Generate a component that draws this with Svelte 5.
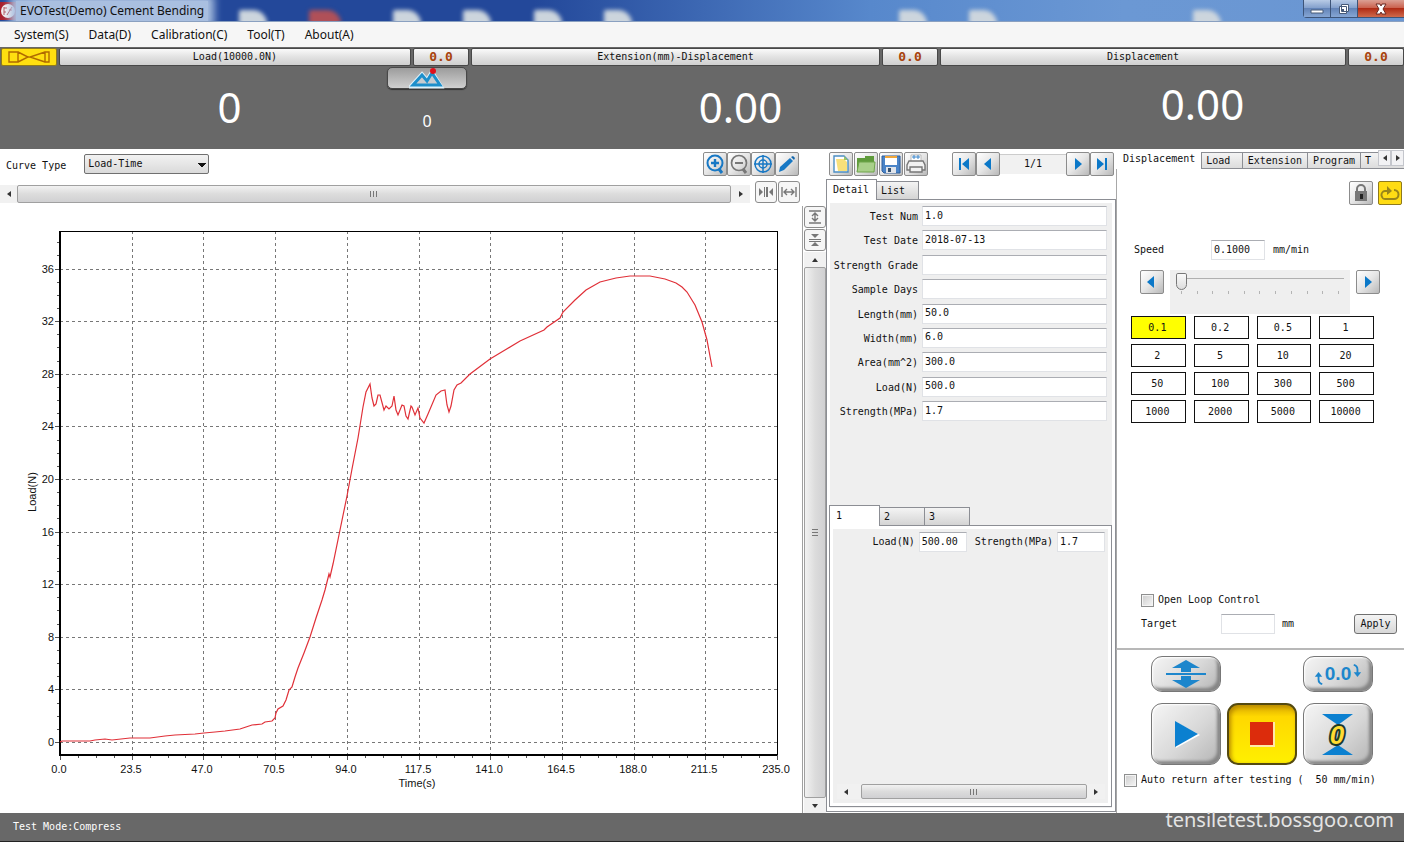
<script lang="ts">
	const menus = ['System(S)', 'Data(D)', 'Calibration(C)', 'Tool(T)', 'About(A)'];
	const speeds = ['0.1', '0.2', '0.5', '1', '2', '5', '10', '20', '50', '100', '300', '500', '1000', '2000', '5000', '10000'];
	const modes = ['Displacement', 'Load', 'Extension', 'Program', 'T'];
	const fields = $state([
		{ id: 'num', label: 'Test Num', value: '1.0' },
		{ id: 'date', label: 'Test Date', value: '2018-07-13' },
		{ id: 'grade', label: 'Strength Grade', value: '' },
		{ id: 'days', label: 'Sample Days', value: '' },
		{ id: 'length', label: 'Length(mm)', value: '50.0' },
		{ id: 'width', label: 'Width(mm)', value: '6.0' },
		{ id: 'area', label: 'Area(mm^2)', value: '300.0' },
		{ id: 'load', label: 'Load(N)', value: '500.0' },
		{ id: 'strength', label: 'Strength(MPa)', value: '1.7' }
	]);
	let speed = $state('0.1');
	let mode = $state('Displacement');
	let detailTab = $state('Detail');
	let sample = $state('1');

	// chart geometry
	const left = 60;
	const right = 777;
	const top = 25;
	const bottom = 549;
	const xTicks = Array.from({ length: 11 }, (_, i) => ({
		x: left + Math.round((i * (right - left)) / 10),
		label: (i * 23.5).toFixed(1)
	}));
	const yTicks = Array.from({ length: 10 }, (_, i) => ({ y: 536 - Math.round(i * 52.6), label: i * 4 }));
	const xMinor = Array.from({ length: 40 }, (_, i) => left + Math.round((i * (right - left)) / 40));
	const yMinor = Array.from({ length: 39 }, (_, i) => 536 - Math.round(i * 13.15));
	const curve =
		'60,536 62,535 90,535 95,534 105,533 112,534 130,532 150,532 165,530 175,529 195,528 204,527 215,526 225,525 240,523 246,521 252,519 262,518 265,516 272,515 275,512 276,507 278,503 283,500 286,494 289,484 292,481 295,471 298,462 304,447 310,431 316,412 322,394 325,384 327,376 329,368 330,371 333,358 340,324 347,290 352,263 358,232 363,201 366,186 370,178 372,192 374,200 376,198 378,189 380,189 384,204 386,200 389,203 392,200 394,190 396,204 398,209 402,199 404,200 406,210 408,213 411,200 412,201 415,209 418,202 420,212 424,217 428,208 436,189 441,185 445,184 447,199 449,206 451,200 454,184 457,179 461,177 470,168 490,153 505,144 520,135 544,124 547,121 560,112 563,106 575,94 586,84 600,76 616,72 630,70 650,70 665,73 676,77 682,81 687,86 695,99 702,116 707,134 712,161';
</script>

{#snippet grip()}
	<i class="grip"></i>
{/snippet}

<div class="app">
	<header class="titlebar">
		<svg class="logo" viewBox="0 0 16 18">
			<rect width="16" height="18" fill="#a81f2c" />
			<circle cx="8" cy="9" r="7" fill="#f4f0f0" />
			<path d="M4 5v8M4 6h3M4 10h2M7 13l5-8M9 8h3" stroke="#b4525c" fill="none" />
		</svg>
		<span class="title">EVOTest(Demo) Cement Bending</span>
		<i class="blob b1"></i><i class="blob red"></i><i class="blob b2"></i><i class="blob b3"></i>
		<i class="blob b4"></i><i class="blob b5"></i><i class="blob b6"></i><i class="blob b7"></i><i class="blob b8"></i>
		<div class="winButtons">
			<button aria-label="Minimize"><svg viewBox="0 0 14 12"><path d="M1 7h12v3H1z" fill="#fff" stroke="#475a78" /></svg></button>
			<button aria-label="Restore"><svg viewBox="0 0 14 12"><path d="M4.500 1.500h7v7h-7zM2.500 3.500h7v7h-7z" fill="#fff" stroke="#475a78" /><path d="M5 6h2v2H5z" fill="#475a78" /></svg></button>
			<button class="close" aria-label="Close"><svg viewBox="0 0 14 12"><path d="M2 1h4l1 2 1-2h4L9 6l3 5H8L7 9l-1 2H2l3-5z" fill="#fff" stroke="#6b2a24" /></svg></button>
		</div>
	</header>

	<nav class="menu">
		{#each menus as item}
			<button>{item}</button>
		{/each}
	</nav>

	<section class="readouts">
		<div class="readout">
			<div class="bar">
				<button class="clamp" aria-label="Specimen">
					<svg viewBox="0 0 42 12"><path d="M1 1h9v10H1zM10 1l10 5-10 5M41 1h-4v10h4zM37 1L22 6l15 5" fill="none" stroke="#b06a00" stroke-width="1.4" /></svg>
				</button>
				<button class="name">Load(10000.0N)</button>
				<button class="zero">0.0</button>
			</div>
			<div class="values">
				<output class="big">0</output>
				<div class="peak">
					<button aria-label="Peak">
						<svg viewBox="0 0 36 22"><path d="M3 19L13 8l5 6 5-8 8 13z" fill="none" stroke="#dff2fb" stroke-width="5" /><path d="M4 18L13 8l5 6 5-8 8 12z" fill="#c8ccd0" stroke="#1d8fcb" stroke-width="3" /><circle cx="24" cy="4" r="3" fill="#e0101c" /></svg>
					</button>
					<output>0</output>
				</div>
			</div>
		</div>
		<div class="readout">
			<div class="bar">
				<button class="name">Extension(mm)-Displacement</button>
				<button class="zero">0.0</button>
			</div>
			<div class="values"><output class="big">0.00</output></div>
		</div>
		<div class="readout last">
			<div class="bar">
				<button class="name">Displacement</button>
				<button class="zero">0.0</button>
			</div>
			<div class="values"><output class="big">0.00</output></div>
		</div>
	</section>

	<main>
		<section class="chartPane">
			<div class="curveBar">
				<label for="curve">Curve Type</label>
				<select id="curve">
					<option>Load-Time</option>
					<option>Load-Extension</option>
				</select>
				<div class="tools">
					<button class="tool" aria-label="Zoom in"><svg viewBox="0 0 22 22" fill="none" stroke="#1878c4" stroke-width="2"><circle cx="11" cy="10" r="7.5" /><path d="M11 6v8M7 10h8" stroke-width="2.4" /><path d="M15 16l3 4" stroke-width="3" /></svg></button>
					<button class="tool" aria-label="Zoom out"><svg viewBox="0 0 22 22" fill="none" stroke="#777" stroke-width="1.7"><circle cx="11" cy="10" r="7.5" /><path d="M7 10h8" stroke-width="2" /><path d="M15 16l3 4" stroke-width="3" /></svg></button>
					<button class="tool" aria-label="Fit"><svg viewBox="0 0 22 22" fill="none" stroke="#1878c4" stroke-width="1.5"><circle cx="11" cy="11" r="8" /><circle cx="11" cy="11" r="4" /><path d="M11 2v18M2 11h18" /></svg></button>
					<button class="tool" aria-label="Edit"><svg viewBox="0 0 22 22"><path d="M3 19l1-5L14 5l3 3-9 9z" fill="#1878c4" /><path d="M15 4l2-1 2 2-1 2z" fill="#1467ab" /></svg></button>
				</div>
			</div>
			<div class="scrollRow">
				<div class="scroll">
					<button aria-label="Scroll left"><i class="arrow west"></i></button>
					<div class="thumb">{@render grip()}</div>
					<button aria-label="Scroll right"><i class="arrow east"></i></button>
				</div>
				<button class="fit" aria-label="Compress time"><svg viewBox="0 0 16 16" fill="#777"><path d="M1 4l4 4-4 4zM15 4l-4 4 4 4zM6 3h1v10H6zM8 3h2v10H8z" /></svg></button>
				<button class="fit" aria-label="Expand time"><svg viewBox="0 0 16 16" fill="none" stroke="#777" stroke-width="1.4"><path d="M1 3v10M15 3v10M3 8h10M6 5L3 8l3 3M10 5l3 3-3 3" /></svg></button>
			</div>
			<svg class="chart" viewBox="0 0 802 606" role="img" aria-label="Load over time">
				{#each xTicks.slice(1, 10) as t}
					<line class="gridline" x1={t.x} x2={t.x} y1={top} y2={bottom} />
				{/each}
				{#each yTicks as t}
					<line class="gridline" x1={left} x2={right} y1={t.y} y2={t.y} />
					<line class="tick" x1={left - 5} x2={left} y1={t.y} y2={t.y} />
					<text x="54" y={t.y + 4} text-anchor="end">{t.label}</text>
				{/each}
				{#each xMinor as x}
					<line class="tick" x1={x} x2={x} y1={bottom} y2={bottom + 3} />
				{/each}
				{#each yMinor as y}
					<line class="tick" x1={left - 3} x2={left} y1={y} y2={y} />
				{/each}
				{#each xTicks as t}
					<line class="tick" x1={t.x} x2={t.x} y1={bottom} y2={bottom + 5} />
					<text x={t.x - 1} y="567" text-anchor="middle">{t.label}</text>
				{/each}
				<path d="M{left} {top}H{right}V{bottom}" class="frame" />
				<path d="M{left} {top}V{bottom}H{right}" class="axis" />
				<text x="417" y="581" text-anchor="middle">Time(s)</text>
				<text transform="translate(36 286) rotate(-90)" text-anchor="middle">Load(N)</text>
				<polyline points={curve} />
			</svg>
		</section>

		<aside class="strip">
			<button class="fit" aria-label="Expand load"><svg viewBox="0 0 16 16" fill="none" stroke="#777" stroke-width="1.4"><path d="M2 2h12M2 14h12M8 4v8M5 7l3-3 3 3M5 9l3 3 3-3" /></svg></button>
			<button class="fit" aria-label="Compress load"><svg viewBox="0 0 16 16" fill="#777"><path d="M4 2h8L8 6zM4 14h8l-4-4zM2 7h12v1H2zM2 9h12v1H2z" /></svg></button>
			<div class="scroll vertical">
				<button aria-label="Scroll up"><i class="arrow north"></i></button>
				<div class="thumb">{@render grip()}</div>
				<button aria-label="Scroll down"><i class="arrow south"></i></button>
			</div>
		</aside>

		<section class="record">
			<div class="recordBar">
				<button class="tool" aria-label="New"><svg viewBox="0 0 22 22"><path d="M4 3h10l4 4v12H4z" fill="#fff" stroke="#4c8fc4" stroke-width="1.4" /><path d="M6 6h8l3 3v9H8z" fill="#f8e07a" /><path d="M14 3l4 4h-4z" fill="#9ac46a" /></svg></button>
				<button class="tool" aria-label="Open"><svg viewBox="0 0 22 22"><path d="M2 5h8V3h9v15H2z" fill="#5f9b3c" /><path d="M4 9h16l-1 10H2z" fill="#a9d08a" stroke="#6ea44b" /></svg></button>
				<button class="tool" aria-label="Save"><svg viewBox="0 0 22 22"><path d="M2 3h18v17H4l-2-2z" fill="#4a84c8" stroke="#2e5f9c" /><path d="M5 4h12v8H5z" fill="#fff" /><path d="M5 3h12v2H5z" fill="#f0a63a" /><path d="M6 14h10v6H6z" fill="#e0e4ea" /><path d="M8 15h3v4H8z" fill="#35506f" /></svg></button>
				<button class="tool" aria-label="Print"><svg viewBox="0 0 22 22" fill="#f2f2f2" stroke="#777"><path d="M6 9V2h10v7z" fill="#fff" stroke="#bbb" /><path d="M8 3h2v2H8zM12 3h2v2h-2z" stroke="#3a86cc" fill="none" /><path d="M4 8h14l2 4v5H2v-5z" stroke-width="1.4" /><path d="M5 14h12v5H5z" stroke-width="1.4" /></svg></button>
				<div class="pager">
					<button class="tool" aria-label="First"><svg viewBox="0 0 22 22" fill="#0b78c8"><path d="M6 5h2v12H6zM16 5v12l-7-6z" /></svg></button>
					<button class="tool" aria-label="Previous"><svg viewBox="0 0 22 22" fill="#0b78c8"><path d="M14 5v12l-7-6z" /></svg></button>
					<span>1/1</span>
					<button class="tool" aria-label="Next"><svg viewBox="0 0 22 22" fill="#0b78c8"><path d="M8 5v12l7-6z" /></svg></button>
					<button class="tool" aria-label="Last"><svg viewBox="0 0 22 22" fill="#0b78c8"><path d="M6 5v12l7-6zM14 5h2v12h-2z" /></svg></button>
				</div>
			</div>
			<div class="tabs" role="tablist">
				{#each ['Detail', 'List'] as tab}
					<button role="tab" aria-selected={detailTab === tab} class:active={detailTab === tab} onclick={() => (detailTab = tab)}>{tab}</button>
				{/each}
			</div>
			<div class="sheet outer">
				<form class="fields">
					{#each fields as field}
						<div class="field">
							<label for={field.id}>{field.label}</label>
							<input id={field.id} bind:value={field.value} />
						</div>
					{/each}
				</form>
				<div class="tabs sub" role="tablist">
					{#each ['1', '2', '3'] as tab}
						<button role="tab" aria-selected={sample === tab} class:active={sample === tab} onclick={() => (sample = tab)}>{tab}</button>
					{/each}
				</div>
				<div class="sheet inner">
					<div class="result">
						<label for="rload">Load(N)</label>
						<input id="rload" value="500.00" />
						<label for="rstrength">Strength(MPa)</label>
						<input id="rstrength" value="1.7" />
					</div>
					<div class="scroll small">
						<button aria-label="Scroll left"><i class="arrow west"></i></button>
						<div class="thumb">{@render grip()}</div>
						<button aria-label="Scroll right"><i class="arrow east"></i></button>
					</div>
				</div>
			</div>
		</section>

		<section class="control">
			<div class="modes" role="tablist">
				{#each modes as tab}
					<button role="tab" aria-selected={mode === tab} class:active={mode === tab} onclick={() => (mode = tab)}>{tab}</button>
				{/each}
				<div class="modeArrows">
					<button aria-label="Previous tab"><i class="arrow west"></i></button>
					<button aria-label="Next tab"><i class="arrow east"></i></button>
				</div>
			</div>
			<div class="modePanel">
				<div class="locks">
					<button class="tool" aria-label="Lock"><svg viewBox="0 0 22 22"><path d="M7 10V7a4 4 0 0 1 8 0v3" fill="none" stroke="#777" stroke-width="2" /><rect x="5" y="9" width="12" height="10" fill="#777" /><path d="M10 12h3v5h-3z" fill="#222" /></svg></button>
					<button class="tool yellow" aria-label="Loop"><svg viewBox="0 0 22 22"><path d="M15 8a4.500 4.500 0 0 1 0 9H7a4 4 0 0 1-1-8h4" fill="none" stroke="#99851a" stroke-width="2" /><path d="M8 4l5 5-5 4z" fill="#99851a" /></svg></button>
				</div>
				<div class="speedRow">
					<label for="speed">Speed</label>
					<input id="speed" value="0.1000" />
					<span>mm/min</span>
				</div>
				<div class="sliderRow">
					<button class="tool" aria-label="Slower"><svg viewBox="0 0 22 22" fill="#0b78c8"><path d="M13 5v12l-7-6z" /></svg></button>
					<div class="slider">
						<input type="range" min="0" max="10" value="0" aria-label="Speed" />
						<div class="ticks">
							{#each Array(11) as _}<i></i>{/each}
						</div>
					</div>
					<button class="tool" aria-label="Faster"><svg viewBox="0 0 22 22" fill="#0b78c8"><path d="M8 5v12l7-6z" /></svg></button>
				</div>
				<div class="speeds">
					{#each speeds as s}
						<button class:selected={speed === s} onclick={() => (speed = s)}>{s}</button>
					{/each}
				</div>
				<label class="check loop"><input type="checkbox" />Open Loop Control</label>
				<div class="target">
					<label for="target">Target</label>
					<input id="target" />
					<span>mm</span>
					<button>Apply</button>
				</div>
			</div>
			<div class="drive">
				<div class="driveRow">
					<button class="pill" aria-label="Move"><svg viewBox="0 0 44 30" fill="#1d86cc"><path d="M22 1l14 8h-9v4H17V9H8zM22 29l14-8h-9v-4H17v4H8zM2 14h40v2H2z" /></svg></button>
					<button class="pill zeroAll">
						<svg viewBox="0 0 9 14"><path d="M4 3v5q0 4 4 5" fill="none" stroke="#1d86cc" stroke-width="2" /><path d="M0 5l4-5 4 5z" fill="#1d86cc" /></svg>
						0.0
						<svg class="cw" viewBox="0 0 9 14"><path d="M4 3v5q0 4 4 5" fill="none" stroke="#1d86cc" stroke-width="2" /><path d="M0 5l4-5 4 5z" fill="#1d86cc" /></svg>
					</button>
				</div>
				<div class="driveRow">
					<button class="large" aria-label="Start"><svg viewBox="0 0 46 46"><path d="M13 11v26l24-13z" fill="#fff" /><path d="M12 10v26l23-13z" fill="#0b80d0" /></svg></button>
					<button class="large stop" aria-label="Stop"><svg viewBox="0 0 46 46"><path d="M11 11h25v25H11z" fill="#ffe9a8" /><path d="M11 11h23v23H11z" fill="#dc2c0c" /></svg></button>
					<button class="large" aria-label="Return to zero">
						<svg viewBox="0 0 46 46"><path d="M7 3h31L23 14zM7 44h31L23 34z" fill="#0b80d0" /><text x="22" y="33">0</text></svg>
					</button>
				</div>
				<label class="check"><input type="checkbox" />Auto return after testing (<span>50</span>mm/min)</label>
			</div>
		</section>
	</main>

	<footer>
		<span>Test Mode:Compress</span>
		<span class="site">tensiletest.bossgoo.com</span>
	</footer>
</div>

<style>
	:global(body) {
		margin: 0;
		background: #fff;
	}
	.app {
		display: flex;
		flex-direction: column;
		min-height: 100vh;
		font: 10px/14px 'DejaVu Sans Mono', monospace;
		color: #111;
	}
	.app * {
		box-sizing: border-box;
	}
	button,
	input,
	select {
		font: inherit;
		color: inherit;
		margin: 0;
		padding: 0;
		border: 0;
		background: none;
		border-radius: 0;
	}
	button {
		display: flex;
		align-items: center;
		justify-content: center;
	}
	svg {
		display: block;
	}

	.titlebar {
		position: relative;
		display: flex;
		align-items: center;
		height: 22px;
		overflow: hidden;
		border-bottom: 1px solid #8aa0c0;
		background: linear-gradient(90deg, #23489a 0, #23489a 38%, #5788cc 62%, #6b98d4 80%, #6a96d2 100%);
	}
	.logo {
		width: 16px;
		height: 18px;
		z-index: 1;
	}
	.title {
		z-index: 1;
		padding: 0 4px;
		font: 12px/20px 'Noto Sans', sans-serif;
		background: #a9bfe0;
		box-shadow: 0 0 8px 6px #a9bfe0;
	}
	.blob {
		position: absolute;
		top: 10px;
		width: 28px;
		height: 16px;
		border-radius: 2px 14px 0 0;
		background: #ccd5dd;
		filter: blur(2px);
	}
	.b1 { left: 17%; }
	.b2 { left: 28%; }
	.b3 { left: 33%; }
	.b4 { left: 38%; }
	.b5 { left: 43%; }
	.b6 { left: 64%; }
	.b7 { left: 69%; }
	.b8 { left: 85%; }
	.red {
		left: 22%;
		width: 32px;
		background: #b05058;
	}
	.winButtons {
		display: flex;
		align-self: flex-start;
		margin-left: auto;
		z-index: 1;
		border: 1px solid #3d5478;
		border-width: 0 0 1px 1px;
		border-radius: 0 0 0 4px;
	}
	.winButtons button {
		width: 27px;
		height: 17px;
		border-right: 1px solid #3d5478;
		background: linear-gradient(#b8cbe6, #7f9dca 50%, #6384b8 50%, #86a6d4);
	}
	.winButtons .close {
		width: 46px;
		border: 0;
		background: linear-gradient(#dba094, #c95c48 50%, #b02c16 50%, #cf6a4c);
	}
	.winButtons svg {
		width: 14px;
		height: 12px;
	}

	.menu {
		display: flex;
		gap: 20px;
		height: 25px;
		padding: 0 14px;
		background: #f6f6f6;
		font: 12px/24px 'Noto Sans', sans-serif;
	}

	.readouts {
		display: grid;
		grid-template-columns: 470fr 469fr 465fr;
		height: 102px;
		background: #686868;
	}
	.readout {
		display: flex;
		flex-direction: column;
		min-width: 0;
	}
	.bar {
		display: flex;
		gap: 2px;
		padding: 1px 1px 0;
		height: 19px;
	}
	.last .bar {
		padding-right: 0;
	}
	.bar button {
		border: 1px solid #484848;
		border-radius: 2px;
		background: linear-gradient(#fafafa, #e2e2e2 50%, #cfcfcf);
	}
	.bar .name {
		flex: 1;
	}
	.bar .zero {
		width: 56px;
		font-size: 13px;
		font-weight: bold;
		color: #a8430c;
	}
	.bar .clamp {
		width: 56px;
		background: #ffdf10;
		border-color: #8f7a1c;
	}
	.clamp svg {
		width: 42px;
		height: 12px;
	}
	.values {
		flex: 1;
		display: flex;
		padding-left: 72px;
		color: #fff;
		font-family: 'Noto Sans', sans-serif;
	}
	.last .values {
		padding-left: 62px;
	}
	.big {
		flex: 1;
		text-align: center;
		font-size: 42px;
		line-height: 82px;
	}
	.last .big {
		line-height: 76px;
	}
	.peak {
		display: flex;
		flex-direction: column;
		align-items: center;
		gap: 22px;
		padding: 1px 3px 0 0;
	}
	.peak button {
		width: 80px;
		height: 22px;
		border: 1px solid #484848;
		border-radius: 5px;
		background: linear-gradient(#9c9c9c, #d0d0d0);
		box-shadow: 0 1px 1px #333;
	}
	.peak svg {
		width: 36px;
		height: 22px;
	}
	.peak output {
		font-size: 16px;
		line-height: 20px;
	}

	main {
		flex: 1;
		display: grid;
		grid-template-columns: minmax(0, 1fr) 24px 290px 288px;
	}
	.tool {
		width: 24px;
		height: 24px;
		flex: none;
		border: 1px solid #8c8c8c;
		border-radius: 2px;
		background: linear-gradient(135deg, #fff, #e6e6e6 50%, #b8b8b8);
	}
	.tool svg {
		width: 22px;
		height: 22px;
	}
	.tool.yellow {
		background: #ffdc14;
		border-color: #8f7a1c;
	}
	.fit {
		width: 22px;
		height: 22px;
		flex: none;
		border: 1px solid #8c8c8c;
		border-radius: 3px;
		background: #f6f6f6;
	}
	.fit svg {
		width: 16px;
		height: 16px;
	}

	.chartPane {
		padding-top: 3px;
	}
	.curveBar {
		display: flex;
		align-items: center;
		height: 24px;
		padding: 0 3px 0 6px;
		gap: 18px;
	}
	.curveBar label {
		padding-top: 3px;
	}
	select {
		appearance: none;
		width: 125px;
		height: 20px;
		padding: 0 3px;
		border: 1px solid #707070;
		border-radius: 2px;
		background:
			conic-gradient(from -45deg at 50% 100%, #111 90deg, transparent 0) 113px 8px / 8px 4px no-repeat,
			linear-gradient(#f2f2f2, #dadada);
	}
	.tools {
		display: flex;
		margin-left: auto;
	}
	.scrollRow {
		display: flex;
		align-items: center;
		gap: 1px;
		height: 22px;
		margin: 5px 2px 0 0;
	}
	.scroll {
		flex: 1;
		display: flex;
		height: 18px;
		background: #f1f1f1;
	}
	.scroll > button {
		width: 17px;
	}
	.scrollRow .scroll {
		margin: 3px 4px 0 0;
	}
	.scrollRow .scroll > button:last-child {
		width: 19px;
	}
	.thumb {
		flex: 1;
		display: flex;
		align-items: center;
		justify-content: center;
		border: 1px solid #a0a0a0;
		border-radius: 2px;
		background: linear-gradient(#f2f2f2, #dcdcdc 50%, #d0d0d2);
	}
	.grip {
		width: 8px;
		height: 6px;
		background: repeating-linear-gradient(90deg, #777 0 1px, transparent 1px 3px);
	}
	.arrow {
		width: 0;
		height: 0;
		border: 3px solid transparent;
	}
	.west { border-right: 4px solid #333; border-left: 0; }
	.east { border-left: 4px solid #333; border-right: 0; }
	.north { border-bottom: 4px solid #333; border-top: 0; }
	.south { border-top: 4px solid #333; border-bottom: 0; }

	.chart {
		width: 100%;
		margin-top: 3px;
		height: auto;
	}
	.chart text {
		font: 11px 'Liberation Sans', sans-serif;
		fill: #111;
	}
	.gridline {
		stroke: #777;
		stroke-dasharray: 3 3;
		shape-rendering: crispEdges;
	}
	.tick {
		stroke: #555;
		shape-rendering: crispEdges;
	}
	.frame {
		fill: none;
		stroke: #000;
		shape-rendering: crispEdges;
	}
	.axis {
		fill: none;
		stroke: #000;
		stroke-width: 2;
	}
	polyline {
		fill: none;
		stroke: #e03038;
		stroke-width: 1.2;
	}

	.strip {
		display: flex;
		flex-direction: column;
		gap: 1px;
		margin-top: 57px;
		padding: 0 1px;
		border-left: 1px solid #a0a0a0;
	}
	.vertical {
		flex-direction: column;
		width: 22px;
	}
	.vertical > button {
		width: 22px;
		height: 15px;
	}
	.vertical .thumb {
		background: linear-gradient(90deg, #f2f2f2, #dcdcdc 50%, #d0d0d2);
	}
	.vertical .grip {
		transform: rotate(90deg);
	}

	.record {
		display: flex;
		flex-direction: column;
		padding-top: 3px;
	}
	.recordBar {
		display: flex;
		gap: 1px;
		padding: 0 2px 0 3px;
	}
	.pager {
		display: flex;
		margin-left: auto;
	}
	.pager span {
		width: 66px;
		line-height: 18px;
		margin: 2px 0;
		text-align: center;
		background: #f1f1f1;
		border-top: 1px solid #ccc;
	}
	.tabs {
		display: flex;
		align-items: flex-end;
		height: 20px;
		margin-top: 3px;
	}
	.tabs button {
		height: 18px;
		width: 42px;
		padding-left: 4px;
		justify-content: flex-start;
		border: 1px solid #8c8e94;
		border-width: 1px 1px 0 0;
		background: linear-gradient(#f4f4f4, #d4d4d4);
	}
	.tabs .active {
		width: 51px;
		height: 21px;
		margin-bottom: -1px;
		padding-left: 6px;
		border-left-width: 1px;
		background: #fff;
		z-index: 1;
	}
	.sheet {
		flex: 1;
		display: flex;
		flex-direction: column;
		border: 1px solid #8c8e94;
		background: #efefef;
		box-shadow: inset 0 0 0 3px #fff;
	}
	.outer {
		padding: 6px 3px 4px 2px;
		margin-bottom: 1px;
	}
	.fields {
		display: flex;
		flex-direction: column;
		justify-content: space-between;
		height: 215px;
		padding-right: 5px;
	}
	.field {
		display: flex;
		align-items: center;
		gap: 4px;
	}
	.field label {
		width: 89px;
		padding-top: 2px;
		text-align: right;
	}
	input {
		width: 54px;
		height: 20px;
		padding: 0 2px 2px;
		border: 1px solid #e0e2e6;
		border-top-color: #abadb3;
		background: #fff;
	}
	.field input {
		flex: 1;
	}
	.tabs.sub {
		margin-top: 84px;
	}
	.sub button {
		width: 45px;
	}
	.inner {
		padding: 6px 6px 7px 7px;
	}
	.result {
		display: flex;
		align-items: center;
		justify-content: flex-end;
		gap: 4px;
	}
	.result input {
		width: 48px;
	}
	.result input + label {
		margin-left: 4px;
	}
	.small {
		flex: none;
		height: 15px;
		margin-top: auto;
	}
	.small > button {
		width: 18px;
	}
	.small .thumb {
		margin: 0 0 0 6px;
	}

	.control {
		display: flex;
		flex-direction: column;
		min-width: 0;
	}
	.modes {
		position: relative;
		display: flex;
		height: 20px;
		padding-left: 2px;
		overflow: hidden;
	}
	.modes > button {
		height: 17px;
		margin-top: 3px;
		padding: 0 5px;
		border: 1px solid #8c8e94;
		border-width: 1px 0 1px 1px;
		background: linear-gradient(#f4f4f4, #dcdcdc);
	}
	.modes > button:nth-child(2) {
		width: 46px;
		padding-left: 4px;
		justify-content: flex-start;
	}
	.modes > .active {
		height: 20px;
		margin: 0;
		padding: 0 6px 0 5px;
		border: 0;
		background: #fff;
	}
	.modes > button:nth-child(5) {
		width: 50px;
		padding-left: 4px;
		justify-content: flex-start;
	}
	.modeArrows {
		position: absolute;
		right: 0;
		top: 1px;
		display: flex;
	}
	.modeArrows button {
		width: 13px;
		height: 16px;
		border: 1px solid #c4c6cc;
		background: #f2f2f4;
	}
	.modePanel {
		flex: 1;
		display: flex;
		flex-direction: column;
		padding: 12px 0 14px 14px;
		border-bottom: 2px solid #b8b8b8;
	}
	.modePanel,
	.drive {
		border-left: 1px solid #a8a8a8;
	}
	.locks {
		display: flex;
		gap: 5px;
		justify-content: flex-end;
		padding-right: 2px;
	}
	.speedRow {
		display: flex;
		align-items: center;
		margin-top: 35px;
		padding-left: 3px;
		gap: 8px;
	}
	.speedRow label {
		width: 69px;
	}
	.sliderRow {
		display: flex;
		gap: 6px;
		margin: 10px 24px 0 9px;
	}
	.slider {
		flex: 1;
		min-width: 0;
		height: 44px;
		padding: 2px 6px;
		background: #efefef;
	}
	.slider input {
		display: block;
		appearance: none;
		width: 100%;
		height: 18px;
		padding: 0;
		border: 0;
		background: linear-gradient(#b0b0b0, #b0b0b0) 0 6px / 100% 1px no-repeat;
	}
	.slider input::-webkit-slider-thumb {
		appearance: none;
		width: 11px;
		height: 17px;
		border: 1px solid #777;
		border-radius: 2px 2px 6px 6px;
		background: linear-gradient(#fafafa, #ddd);
	}
	.ticks {
		display: flex;
		justify-content: space-between;
		padding: 1px 5px;
	}
	.ticks i {
		width: 1px;
		height: 3px;
		background: #b4b4b4;
	}
	.speeds {
		display: grid;
		grid-template-columns: repeat(4, 1fr);
		gap: 5px 8px;
		margin: 2px 30px 0 0;
	}
	.speeds button {
		height: 23px;
		padding-right: 2px;
		border: 1px solid #111;
		background: #fff;
	}
	.speeds .selected {
		background: #ff0;
	}
	.check {
		display: flex;
		align-items: center;
	}
	.check input {
		appearance: none;
		width: 13px;
		height: 13px;
		margin-right: 4px;
		padding: 0;
		border: 1px solid #8e8f8f;
		background: linear-gradient(135deg, #ccc, #f6f6f6);
		box-shadow: inset 0 0 0 1px #f4f4f4;
	}
	.check span {
		width: 24px;
		margin-left: 6px;
		text-align: center;
	}
	.loop {
		margin: auto 0 0 10px;
	}
	.target {
		display: flex;
		align-items: center;
		gap: 7px;
		padding: 7px 7px 0 10px;
	}
	.target label {
		width: 73px;
	}
	.target button {
		width: 43px;
		height: 20px;
		margin-left: auto;
		border: 1px solid #707070;
		border-radius: 3px;
		background: linear-gradient(#f4f4f4, #d8d8d8);
	}

	.drive {
		display: flex;
		flex-direction: column;
		gap: 11px;
		padding: 6px 0 26px 7px;
	}
	.driveRow {
		display: flex;
		justify-content: space-between;
		margin: 0 31px 0 27px;
	}
	.pill,
	.large {
		width: 70px;
		height: 36px;
		border: 1px solid #777;
		border-radius: 11px;
		background: linear-gradient(135deg, #f6f6f6, #d8d8d8 55%, #b4b4b4);
		box-shadow:
			inset 1px 1px 2px #fff,
			inset -3px -3px 3px #858585;
	}
	.large {
		height: 62px;
	}
	.pill svg {
		width: 44px;
		height: 30px;
	}
	.large svg {
		width: 46px;
		height: 46px;
	}
	.large text {
		font: italic bold 26px 'Liberation Sans', sans-serif;
		text-anchor: middle;
		fill: #ffdc32;
		stroke: #1c3a2c;
		stroke-width: 4px;
		paint-order: stroke;
	}
	.stop {
		border: 2px solid #554a10;
		background: linear-gradient(#d8a800, #ffd800 20%, #fff000);
		box-shadow: inset 2px 2px 4px #b88a00;
	}
	.zeroAll {
		gap: 1px;
		font: bold 19px 'Liberation Sans', sans-serif;
		color: #1d86cc;
	}
	.zeroAll svg {
		width: 10px;
		height: 13px;
		margin-top: 8px;
	}
	.zeroAll .cw {
		margin: 0 0 8px;
		transform: rotate(180deg);
	}
	.drive .check {
		margin-top: -3px;
	}

	footer {
		display: flex;
		align-items: center;
		justify-content: space-between;
		height: 29px;
		padding: 0 10px 0 13px;
		background: #686868;
		border-bottom: 1px solid #222;
		color: #fff;
	}
	.site {
		padding-bottom: 14px;
		font: 20px/20px 'Noto Sans', sans-serif;
		color: #e4e4e4;
	}
</style>
